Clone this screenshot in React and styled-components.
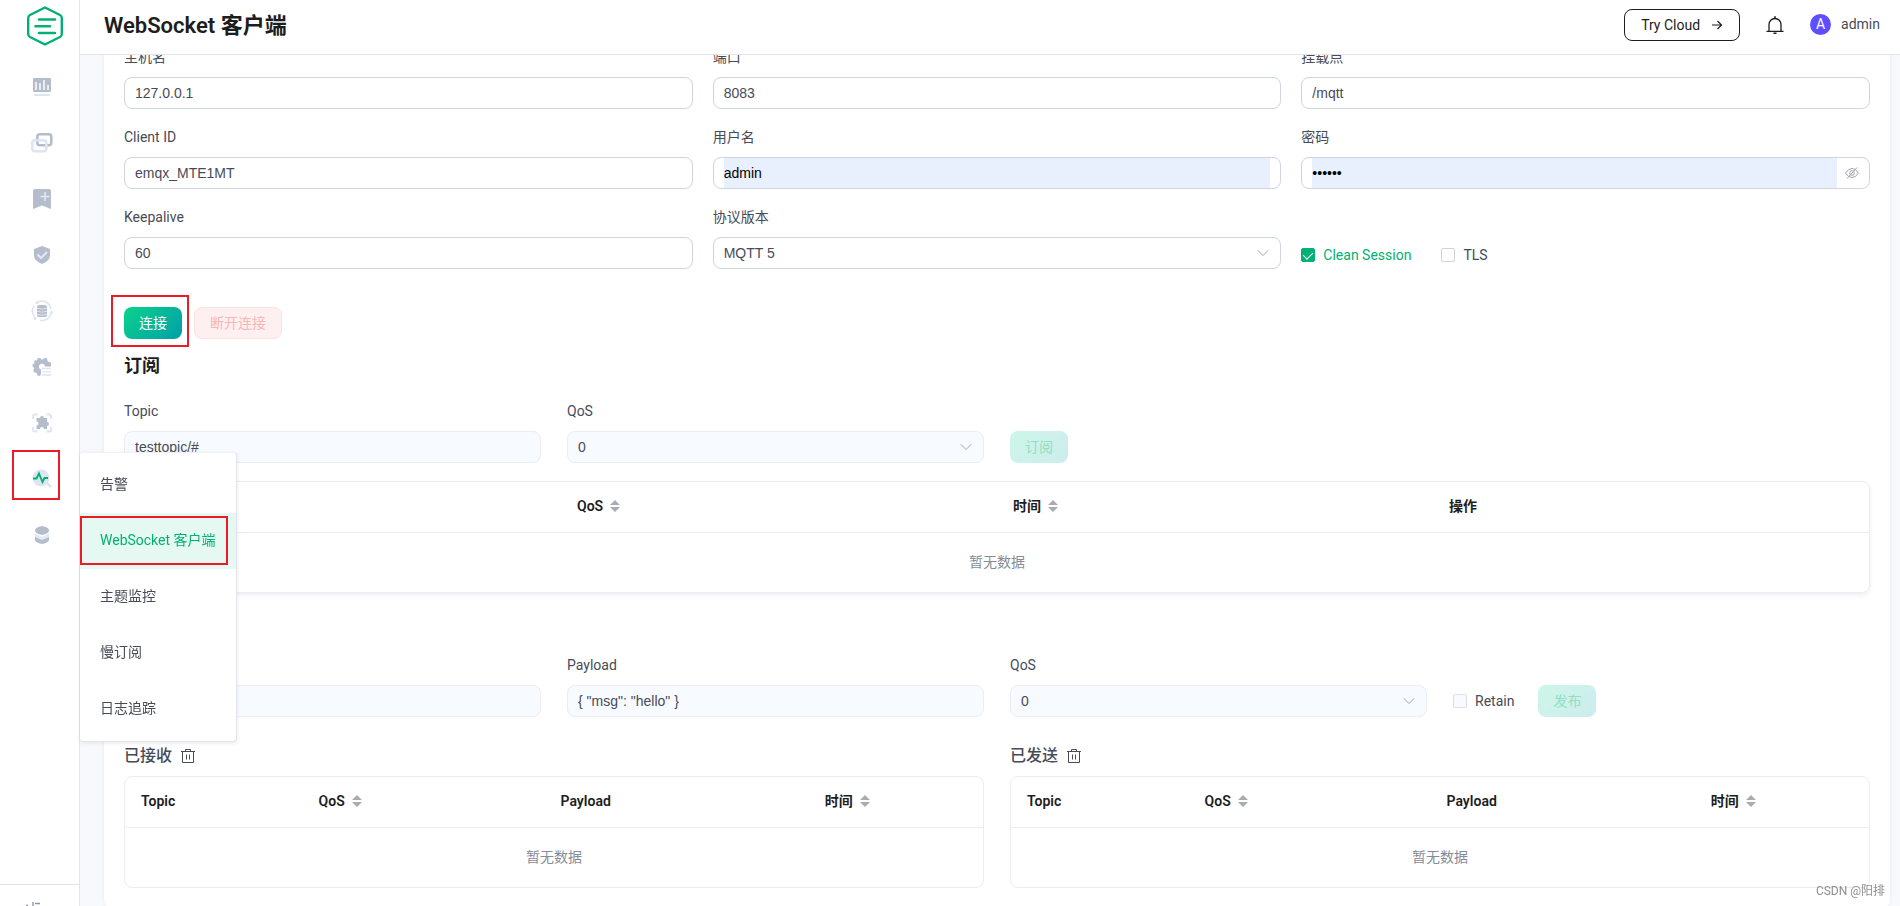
import React, { useLayoutEffect, useRef } from 'react'
import styled, { createGlobalStyle, css } from 'styled-components'

const navItems = [
  { name: 'dashboard', icon: <DashboardIcon /> },
  { name: 'connections', icon: <ConnectionsIcon /> },
  { name: 'subscriptions', icon: <BookmarkIcon /> },
  { name: 'access control', icon: <ShieldIcon /> },
  { name: 'data integration', icon: <DataIcon /> },
  { name: 'management', icon: <GearIcon /> },
  { name: 'extensions', icon: <PuzzleIcon /> },
  { name: 'diagnose', icon: <DiagnoseIcon />, marked: true },
  { name: 'system', icon: <StackIcon /> },
]

const menuItems = ['告警', 'WebSocket 客户端', '主题监控', '慢订阅', '日志追踪']

const subColumns = [
  { title: 'Topic', width: '25%' },
  { title: 'QoS', width: '25%', sortable: true },
  { title: '时间', width: '25%', sortable: true },
  { title: '操作', width: '25%' },
]

const messageColumns = [
  { title: 'Topic', width: '20.7%' },
  { title: 'QoS', width: '28.2%', sortable: true },
  { title: 'Payload', width: '30.8%' },
  { title: '时间', width: '20.3%', sortable: true },
]

export default function App() {
  const content = useRef(null)

  // open the page with the connection form already scrolled up to its fields
  useLayoutEffect(() => {
    content.current.scrollTop = 28
  }, [])

  return (
    <Layout>
      <GlobalStyle />
      <Sidebar />
      <Page>
        <Header />
        <Content ref={content}>
          <Card>
            <ConnectForm />
            <SectionTitle>订阅</SectionTitle>
            <SubscribeForm />
            <DataTable columns={subColumns} $raised />
            <SectionTitle>发布</SectionTitle>
            <PublishForm />
            <Messages>
              <MessageList title="已接收" />
              <MessageList title="已发送" />
            </Messages>
          </Card>
        </Content>
      </Page>
      <Watermark>CSDN @阳排</Watermark>
    </Layout>
  )
}

function Sidebar() {
  return (
    <Aside>
      <Logo href="#home" aria-label="home">
        <LogoIcon />
      </Logo>
      <Nav>
        {navItems.map((item) => (
          <NavItem key={item.name}>
            <NavLink href="#nav" aria-label={item.name}>{item.icon}</NavLink>
            {item.marked && <Mark $inset="-1px 19px 7px 12px" />}
            {item.marked && (
              <SubMenu>
                {menuItems.map((text, i) => (
                  <SubMenuItem key={text} href="#menu" $active={i === 1}>
                    {text}
                    {i === 1 && <Mark $inset="3px 8px 4px 0" />}
                  </SubMenuItem>
                ))}
              </SubMenu>
            )}
          </NavItem>
        ))}
      </Nav>
      <Fold type="button" aria-label="fold menu">
        <FoldIcon />
      </Fold>
    </Aside>
  )
}

function Header() {
  return (
    <TopBar>
      <PageTitle>WebSocket 客户端</PageTitle>
      <TopActions>
        <CloudButton type="button">
          Try Cloud
          <ArrowIcon />
        </CloudButton>
        <IconButton type="button" aria-label="alarms">
          <BellIcon />
        </IconButton>
        <User type="button">
          <Avatar>A</Avatar>
          admin
        </User>
      </TopActions>
    </TopBar>
  )
}

function ConnectForm() {
  return (
    <form>
      <FormGrid>
        <TextField id="host" label="主机名" value="127.0.0.1" />
        <TextField id="port" label="端口" value="8083" />
        <TextField id="path" label="挂载点" value="/mqtt" />
        <TextField id="client" label="Client ID" value="emqx_MTE1MT" />
        <TextField id="username" label="用户名" value="admin" filled />
        <Field>
          <Label htmlFor="password">密码</Label>
          <InputBox>
            <Input id="password" type="password" defaultValue="public" $filled />
            <EyeButton type="button" aria-label="show password">
              <EyeOffIcon />
            </EyeButton>
          </InputBox>
        </Field>
        <TextField id="keepalive" label="Keepalive" value="60" />
        <SelectField id="version" label="协议版本" value="MQTT 5" />
        <CheckRow>
          <CheckLabel $checked>
            <CheckBox type="checkbox" defaultChecked />
            Clean Session
          </CheckLabel>
          <CheckLabel>
            <CheckBox type="checkbox" />
            TLS
          </CheckLabel>
        </CheckRow>
      </FormGrid>
      <ButtonRow>
        <MarkedItem>
          <PrimaryButton type="button">连接</PrimaryButton>
          <Mark $inset="-12px -7px -8px -13px" />
        </MarkedItem>
        <DangerButton type="button" disabled>断开连接</DangerButton>
      </ButtonRow>
    </form>
  )
}

function SubscribeForm() {
  return (
    <ActionGrid>
      <TextField id="sub-topic" label="Topic" value="testtopic/#" disabled />
      <SelectField id="sub-qos" label="QoS" value="0" disabled />
      <ActionCell>
        <PrimaryButton type="button" disabled>订阅</PrimaryButton>
      </ActionCell>
    </ActionGrid>
  )
}

function PublishForm() {
  return (
    <ActionGrid>
      <TextField id="pub-topic" label="Topic" value="testtopic/1" disabled />
      <TextField id="pub-payload" label="Payload" value={'{ "msg": "hello" }'} disabled />
      <SelectField id="pub-qos" label="QoS" value="0" disabled />
      <ActionCell>
        <CheckLabel>
          <CheckBox type="checkbox" disabled />
          Retain
        </CheckLabel>
        <PrimaryButton type="button" disabled>发布</PrimaryButton>
      </ActionCell>
    </ActionGrid>
  )
}

function TextField({ id, label, value, filled, disabled }) {
  return (
    <Field>
      <Label htmlFor={id}>{label}</Label>
      <InputBox $disabled={disabled} $inset={filled}>
        <Input id={id} defaultValue={value} disabled={disabled} $filled={filled} />
      </InputBox>
    </Field>
  )
}

function SelectField({ id, label, value, disabled }) {
  return (
    <Field>
      <Label htmlFor={id}>{label}</Label>
      <InputBox $disabled={disabled}>
        <Select id={id} disabled={disabled}>
          <option>{value}</option>
        </Select>
        <ChevronIcon />
      </InputBox>
    </Field>
  )
}

function DataTable({ columns, $raised }) {
  return (
    <TableBox $raised={$raised}>
      <Table>
        <colgroup>
          {columns.map((col) => <Col key={col.title} $width={col.width} />)}
        </colgroup>
        <thead>
          <tr>
            {columns.map((col) => (
              <Th key={col.title}>
                <ThInner>
                  {col.title}
                  {col.sortable && <SortIcon />}
                </ThInner>
              </Th>
            ))}
          </tr>
        </thead>
        <tbody>
          <tr>
            <Empty colSpan={columns.length}>暂无数据</Empty>
          </tr>
        </tbody>
      </Table>
    </TableBox>
  )
}

function MessageList({ title }) {
  return (
    <section>
      <ListHeader>
        <ListTitle>{title}</ListTitle>
        <IconButton type="button" aria-label="clear">
          <TrashIcon />
        </IconButton>
      </ListHeader>
      <DataTable columns={messageColumns} />
    </section>
  )
}

/* icons */

function LogoIcon() {
  return (
    <svg width="36" height="40" viewBox="0 0 36 40" fill="none" stroke="#00b173" strokeLinecap="round" strokeLinejoin="round">
      <path d="M18 1.5 L33 9 Q34.8 10 34.8 12 V28 Q34.8 30 33 31 L18 38.5 L3 31 Q1.2 30 1.2 28 V12 Q1.2 10 3 9 Z" strokeWidth="2.4" />
      <path d="M12 13.5H28M8.500 20.200H23M12 27H28" strokeWidth="2.6" />
    </svg>
  )
}

function DashboardIcon() {
  return (
    <svg width="20" height="20" viewBox="0 0 20 20">
      <rect x="1" y="1" width="18" height="14" rx="1" fill="#b5bdcd" />
      <path d="M4 5v8M8 6v7M12 3v10M16 8v5" stroke="#eef1f8" strokeWidth="1.8" />
      <path d="M3 18h14" stroke="#dfe4f3" strokeWidth="2" strokeLinecap="round" />
    </svg>
  )
}

function ConnectionsIcon() {
  return (
    <svg width="22" height="20" viewBox="0 0 22 20" fill="none" strokeWidth="2.6">
      <rect x="6.300" y="1.300" width="14" height="11" rx="2.500" stroke="#b5bdcd" />
      <rect x="1.300" y="7.300" width="14" height="11" rx="2.500" stroke="#dfe4f3" />
    </svg>
  )
}

function BookmarkIcon() {
  return (
    <svg width="20" height="20" viewBox="0 0 20 20">
      <path d="M3 0H17Q19 0 19 2V20L10 16.500L1 20V2Q1 0 3 0Z" fill="#b5bdcd" />
      <path d="M13 3v9M8.500 7.500h9" stroke="#e4e8f5" strokeWidth="1.6" />
    </svg>
  )
}

function ShieldIcon() {
  return (
    <svg width="20" height="20" viewBox="0 0 20 20">
      <path d="M10 1L18 4V10.500Q18 16 10 19Q2 16 2 10.500V4Z" fill="#b5bdcd" />
      <path d="M5.500 9.500L9 13L15 7" fill="none" stroke="#e4e8f5" strokeWidth="2" />
    </svg>
  )
}

function DataIcon() {
  return (
    <svg width="22" height="22" viewBox="0 0 22 22" fill="none">
      <path d="M7 1.800A9.500 9.500 0 0 1 20 9M20 14A9.500 9.500 0 0 1 9 20.300M3.500 17A9.500 9.500 0 0 1 3 6" stroke="#dfe4f3" strokeWidth="1.600" />
      <circle cx="6" cy="2.500" r="1.600" fill="#dfe4f3" />
      <circle cx="20.300" cy="12.500" r="1.600" fill="#dfe4f3" />
      <circle cx="4" cy="18.500" r="1.600" fill="#dfe4f3" />
      <rect x="6" y="5" width="10" height="12" rx="2.500" fill="#b5bdcd" />
      <path d="M6 8.200q5 2 10 0M6 11.200q5 2 10 0M6 14.200q5 2 10 0" stroke="#eef1f8" strokeWidth="0.800" />
    </svg>
  )
}

function GearIcon() {
  return (
    <svg width="20" height="20" viewBox="0 0 20 20">
      <path d="M5.500 1.500L8 .8L9.500 2.500H11L12.500 .8L15 1.500L15.500 4L17 5L19 5.500V9.500H13A3 3 0 1 0 9 12.500V17L8 19L5.500 18.500L4.800 16L1.800 15.200L1.500 12.500L2.300 11L.5 9.500V7.500L2.500 6.500L2.200 4L3 3.200L5 3.500Z" fill="#b5bdcd" />
      <path d="M10 11.500h9M10 14.800h9M10 18h9" stroke="#dfe4f3" strokeWidth="1.300" />
    </svg>
  )
}

function PuzzleIcon() {
  return (
    <svg width="20" height="20" viewBox="0 0 20 20" fill="none">
      <path d="M1 6V3Q1 1.500 2.500 1.500H5.500M14.500 1.500H17.500Q19 1.500 19 3V6M19 14V17Q19 18.500 17.500 18.500H14.500M5.500 18.500H2.500Q1 18.500 1 17V14" stroke="#dfe4f3" strokeWidth="1.800" />
      <path d="M8 5a2 2 0 1 1 4 0H15V9a2 2 0 1 1 0 4V16H12a2 2 0 0 0-4 0H4.500V12.500a2 2 0 0 0 0-4V5Z" fill="#b5bdcd" />
    </svg>
  )
}

function DiagnoseIcon() {
  return (
    <svg width="20" height="20" viewBox="0 0 20 20" fill="none">
      <path d="M14 13L19 18" stroke="#dfe4f3" strokeWidth="2.600" />
      <circle cx="9" cy="9" r="8.500" fill="#dfe4f3" />
      <path d="M1 9.500H4.500L7 4.500L10.500 13L12.500 9H16" stroke="#00b173" strokeWidth="1.900" />
    </svg>
  )
}

function StackIcon() {
  return (
    <svg width="20" height="20" viewBox="0 0 20 20">
      <path d="M3 8.500L10 12L17 8.500V12L10 15L3 12Z" fill="#e4e8f5" />
      <path d="M10 1Q17 2 17 5.500Q17 8.500 10 10Q3 8.500 3 5.500Q3 2 10 1Z" fill="#b5bdcd" />
      <path d="M3 12L10 15L17 12V15.500Q15 18 10 19Q5 18 3 15.500Z" fill="#b5bdcd" />
    </svg>
  )
}

function FoldIcon() {
  return (
    <svg width="16" height="16" viewBox="0 0 16 16" fill="none" stroke="#8d96a5">
      <path d="M8 1V15M10 2.500H15M10 8H15M10 13.500H15M1 4.500H3M4 8H7" strokeWidth="1.400" />
    </svg>
  )
}

function ArrowIcon() {
  return (
    <svg width="12" height="12" viewBox="0 0 12 12" fill="none" stroke="#1d1d1d">
      <path d="M1 6H10.500M6.500 2L10.500 6L6.500 10" strokeWidth="1.200" />
    </svg>
  )
}

function BellIcon() {
  return (
    <svg width="18" height="18" viewBox="0 0 18 18" fill="none" stroke="#1d1d1d">
      <path d="M3 15V8.500A6 6 0 0 1 15 8.500V15M.5 15.300H17.500" strokeWidth="1.300" />
      <path d="M9 .3V2.500M7.500 17.300H10.500" strokeWidth="1.600" />
    </svg>
  )
}

function EyeOffIcon() {
  return (
    <svg width="14" height="14" viewBox="0 0 14 14" fill="none" stroke="#a3a6ad">
      <path d="M.6 7Q3 2.500 7 2.500T13.400 7Q11 11.500 7 11.500T.6 7ZM2 12.500L12 1.500" />
      <circle cx="7" cy="7" r="2.300" />
    </svg>
  )
}

function ChevronIcon() {
  return (
    <Chevron width="14" height="14" viewBox="0 0 14 14" fill="none" stroke="#a3a6ad" aria-hidden="true">
      <path d="M1.800 4.300L7 9.600L12.200 4.300" />
    </Chevron>
  )
}

function SortIcon() {
  return (
    <svg width="10" height="14" viewBox="0 0 10 14" fill="#a8abb2">
      <path d="M5 1L10 6H0ZM5 13L0 8H10Z" />
    </svg>
  )
}

function TrashIcon() {
  return (
    <svg width="14" height="16" viewBox="0 0 14 16" fill="none" stroke="#474b57">
      <path d="M0 3.500H14M1.500 3.500V14.500H12.500V3.500M4.500 3.500V1.500H9.500V3.500M5.500 6.500V11.500M8.500 6.500V11.500" />
    </svg>
  )
}

/* styles */

const GlobalStyle = createGlobalStyle`
*{
box-sizing:border-box;
}
body{
margin:0;
color:#474b57;
background-color:#fff;
font-family:Roboto,"Noto Sans CJK SC",sans-serif;
font-size:14px;
line-height:22px;
}
button,input,select{
font:inherit;
color:inherit;
margin:0;
}
a{
color:inherit;
text-decoration:none;
}
svg{
display:block;
flex-shrink:0;
}
`
const Layout = styled.div`
display:flex;
height:100vh;
`
const Aside = styled.aside`
display:flex;
flex-direction:column;
flex-shrink:0;
width:80px;
border-right:1px solid #e3e3ee;
background-color:#fff;
`
const Logo = styled.a`
padding:6px 0 13px 27px;
`
const Nav = styled.nav`
flex:1;
`
const NavItem = styled.div`
position:relative;
`
const NavLink = styled.a`
display:flex;
align-items:center;
justify-content:center;
height:56px;
padding-left:4px;
`
const Fold = styled.button`
height:22px;
padding:16px 0 0 25px;
border:0;
border-top:1px solid #e3e3ee;
background:none;
overflow:hidden;
`
const SubMenu = styled.div`
position:absolute;
z-index:5;
top:1px;
left:80px;
width:157px;
padding:4px 0;
border:1px solid #e3e3ee;
border-left:0;
border-top-color:#f0f0f7;
border-radius:4px;
background-color:#fff;
box-shadow:0 1px 4px rgba(71,75,110,0.12);
`
const SubMenuItem = styled.a`
display:block;
position:relative;
padding:0 20px 2px;
line-height:54px;
${(props) => props.$active && css`
color:#00b173;
background-color:#e5f9f2;
`}
`
const Mark = styled.span`
position:absolute;
z-index:6;
inset:${(props) => props.$inset};
border:2px solid #ed1c24;
pointer-events:none;
`
const MarkedItem = styled.div`
position:relative;
`
const Page = styled.div`
display:flex;
flex-direction:column;
flex:1;
min-width:0;
`
const TopBar = styled.header`
display:flex;
align-items:center;
justify-content:space-between;
flex-shrink:0;
height:55px;
padding:0 20px 4px 24px;
border-bottom:1px solid #e3e3ee;
background-color:#fff;
`
const PageTitle = styled.h1`
margin:0;
padding-top:2px;
color:#1d1d1d;
font-size:22px;
font-weight:600;
line-height:32px;
`
const TopActions = styled.div`
display:flex;
align-items:center;
gap:26px;
`
const CloudButton = styled.button`
display:flex;
align-items:center;
gap:11px;
height:32px;
padding:0 16px;
border:1px solid #1d1d1d;
border-radius:8px;
color:#1d1d1d;
background-color:#fff;
`
const IconButton = styled.button`
padding:0;
border:0;
background:none;
`
const User = styled.button`
display:flex;
align-items:center;
gap:10px;
padding:0 0 2px;
border:0;
background:none;
`
const Avatar = styled.span`
width:21px;
height:21px;
border-radius:50%;
color:#fff;
background-color:#5e4eff;
line-height:21px;
text-align:center;
`
const Content = styled.main`
flex:1;
min-height:0;
padding:0 10px 0 24px;
overflow-y:auto;
background-color:#f8f9fc;
scrollbar-width:none;
`
const Card = styled.div`
padding:20px;
margin-bottom:24px;
border-radius:8px;
background-color:#fff;
box-shadow:0 0 4px rgba(71,75,110,0.08);
`
const FormGrid = styled.div`
display:grid;
grid-template-columns:repeat(3,1fr);
column-gap:20px;
`
const ActionGrid = styled.div`
display:grid;
grid-template-columns:repeat(4,1fr);
column-gap:26px;
`
const Field = styled.div`
min-width:0;
padding-bottom:18px;
`
const Label = styled.label`
display:block;
margin-bottom:10px;
line-height:20px;
`
const InputBox = styled.div`
display:flex;
position:relative;
height:32px;
padding-left:10px;
border:1px solid ${(props) => (props.$disabled ? '#ececf4' : '#d0d3e0')};
border-radius:8px;
background-color:${(props) => (props.$disabled ? '#f7faff' : '#fff')};
font-family:"Liberation Sans",Arial,"Noto Sans CJK SC",sans-serif;
${(props) => props.$inset && css`
padding-right:10px;
`}
`
const Input = styled.input`
flex:1;
min-width:0;
padding:0;
border:0;
outline:0;
background:none;
${(props) => props.$filled && css`
color:#000;
background-color:#e8f0fe;
`}
`
const Select = styled.select`
flex:1;
padding:0;
border:0;
outline:0;
opacity:1;
background:none;
appearance:none;
`
const Chevron = styled.svg`
position:absolute;
top:8px;
right:10px;
pointer-events:none;
`
const EyeButton = styled.button`
display:flex;
align-items:center;
padding:0 10px 0 8px;
border:0;
background:none;
`
const CheckRow = styled.div`
display:flex;
align-items:center;
gap:30px;
height:32px;
margin-top:32px;
`
const CheckLabel = styled.label`
display:flex;
align-items:center;
gap:8px;
color:${(props) => (props.$checked ? '#00b173' : 'inherit')};
`
const CheckBox = styled.input`
appearance:none;
width:14px;
height:14px;
border:1px solid #d0d3e0;
border-radius:2px;
background-color:#fff;
&:checked{
display:grid;
place-items:center;
border-color:#00b173;
background-color:#00b173;
}
&:checked::after{
content:"";
width:5px;
height:8px;
margin-bottom:2px;
border:solid #fff;
border-width:0 1px 1px 0;
transform:rotate(45deg);
}
&:disabled{
border-color:#dcdfec;
background-color:#f7faff;
}
`
const ButtonRow = styled.div`
display:flex;
gap:12px;
padding-top:20px;
`
const PrimaryButton = styled.button`
display:block;
height:32px;
padding:0 15px;
border:0;
border-radius:8px;
color:#fff;
background-image:linear-gradient(135deg,#0bd28b,#009fa8);
&:disabled{
color:#8fe0c4;
background-image:linear-gradient(135deg,#cef6e8,#ccecee);
}
`
const DangerButton = styled.button`
height:32px;
padding:0 15px;
border:1px solid #fde2e2;
border-radius:8px;
color:#fab6b6;
background-color:#fef0f0;
`
const ActionCell = styled.div`
display:flex;
align-items:center;
gap:24px;
height:32px;
margin-top:30px;
`
const SectionTitle = styled.h2`
margin:0;
padding:12px 0 20px;
color:#1d1d1d;
font-size:18px;
font-weight:600;
line-height:30px;
`
const TableBox = styled.div`
border:1px solid #ececf4;
border-radius:8px;
${(props) => props.$raised && css`
box-shadow:0 2px 4px rgba(71,75,140,0.10);
`}
`
const Table = styled.table`
width:100%;
table-layout:fixed;
border-collapse:separate;
border-spacing:0;
`
const Col = styled.col`
width:${(props) => props.$width};
`
const Th = styled.th`
height:51px;
padding:0 16px 2px;
border-bottom:1px solid #ececf4;
color:#1d1d1d;
font-weight:600;
text-align:left;
`
const ThInner = styled.div`
display:flex;
align-items:center;
gap:7px;
`
const Empty = styled.td`
height:59px;
padding:0 0 2px;
color:#858b99;
text-align:center;
`
const Messages = styled.div`
display:grid;
grid-template-columns:repeat(2,1fr);
column-gap:26px;
`
const ListHeader = styled.div`
display:flex;
align-items:center;
gap:9px;
height:41px;
`
const ListTitle = styled.h3`
margin:0;
font-size:16px;
font-weight:500;
`
const Watermark = styled.div`
position:fixed;
z-index:10;
right:15px;
bottom:4px;
color:#8e8e8e;
font-size:12px;
`
